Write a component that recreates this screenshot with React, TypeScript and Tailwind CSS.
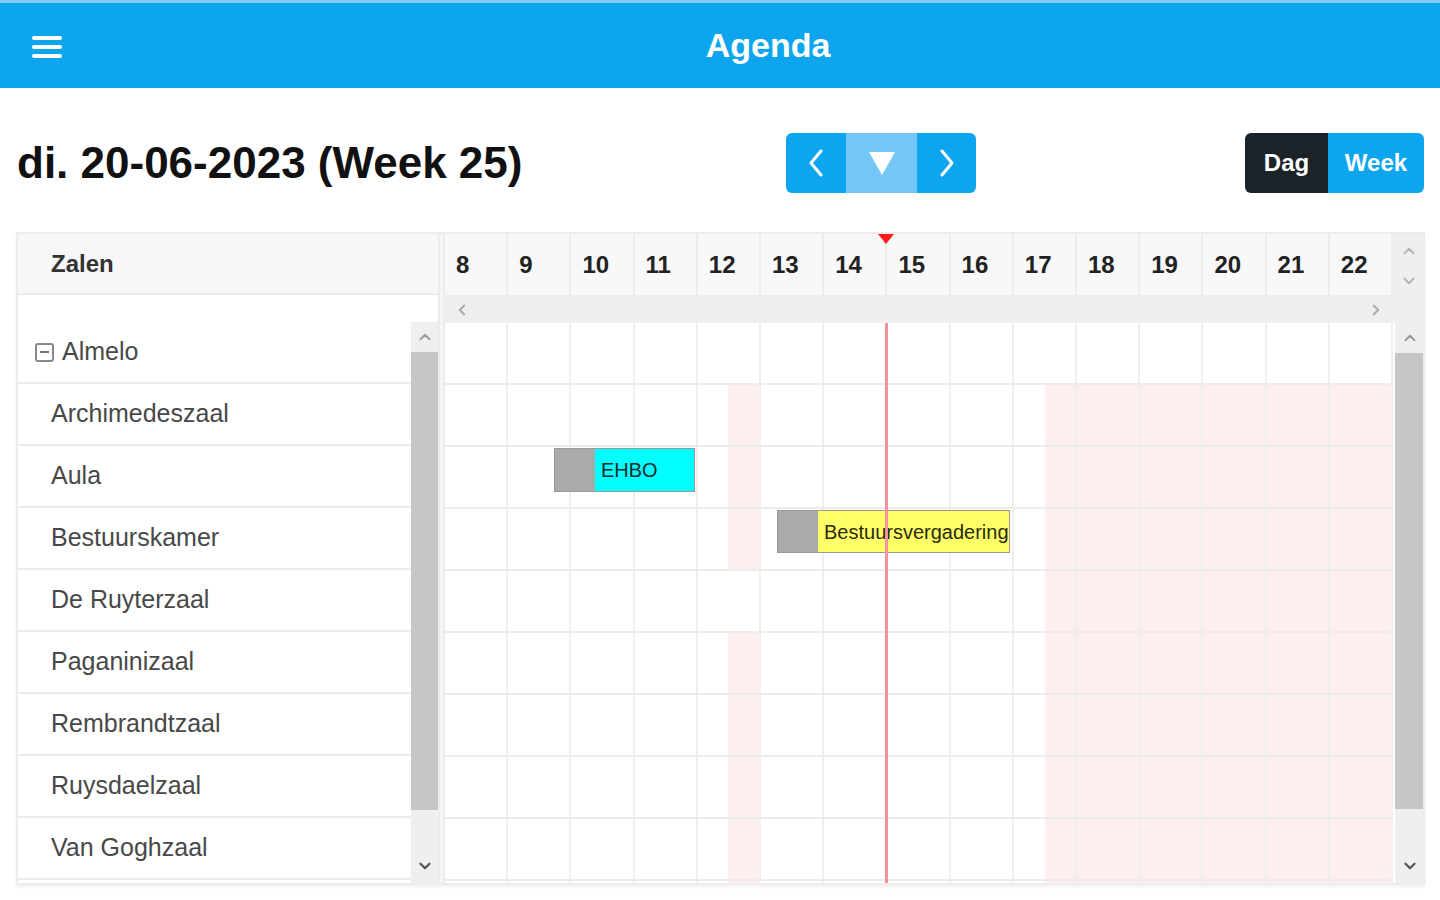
import { ChevronUp, ChevronDown, ChevronLeft, ChevronRight } from "lucide-react";

const hours = [8, 9, 10, 11, 12, 13, 14, 15, 16, 17, 18, 19, 20, 21, 22];

const rooms = [
  "Almelo",
  "Archimedeszaal",
  "Aula",
  "Bestuurskamer",
  "De Ruyterzaal",
  "Paganinizaal",
  "Rembrandtzaal",
  "Ruysdaelzaal",
  "Van Goghzaal",
  "",
];

// which hour cells are (partly) closed for a given row
const cellBg = (row: number, col: number) => {
  if (row === 0) return "bg-white";
  if (col >= 10) return "bg-[#fdefed]";
  if (col === 9) return "bg-[linear-gradient(to_right,#ffffff_50%,#fdefed_50%)]";
  if (col === 4 && row !== 4) return "bg-[linear-gradient(to_right,#ffffff_50%,#fdefed_50%)]";
  return "bg-white";
};

const Scrollbar = ({ thumbH, bottomPad }: { thumbH: number; bottomPad: number }) => (
  <div className="flex h-full flex-col items-center bg-[#efefef]">
    <div className="flex h-[30px] w-full items-center justify-center text-[#9a9a9a]">
      <ChevronUp size={18} strokeWidth={2.5} />
    </div>
    <div className="w-full bg-[#c6c6c6]" style={{ height: thumbH }} />
    <div className="flex-1" />
    <div className="flex w-full items-center justify-center text-[#555]" style={{ height: bottomPad }}>
      <ChevronDown size={18} strokeWidth={3} />
    </div>
  </div>
);

export default function App() {
  return (
    <div className="min-h-[900px] w-[1440px] bg-white font-['Liberation_Sans',Arial,sans-serif]">
      {/* Top bar */}
      <header className="relative flex h-[88px] items-center justify-center border-t-[3px] border-[#86cdf5] bg-[#0ea5ef] pl-[96px]">
        <div className="absolute left-[32px] top-[33px] flex flex-col gap-[5px]">
          <span className="block h-[4px] w-[30px] rounded-sm bg-white" />
          <span className="block h-[4px] w-[30px] rounded-sm bg-white" />
          <span className="block h-[4px] w-[30px] rounded-sm bg-white" />
        </div>
        <h1 className="text-[34px] font-bold text-white">Agenda</h1>
      </header>

      {/* Date + navigation */}
      <div className="mt-[45px] flex h-[60px] items-center pl-[17px] pr-[16px]">
        <div className="w-[769px] text-[44px] font-bold leading-none text-[#111]">di. 20-06-2023 (Week 25)</div>
        <div className="flex h-[60px] overflow-hidden rounded-[6px]">
          <button className="flex w-[60px] items-center justify-center bg-[#0ea5ef] text-white">
            <svg width="16" height="28" viewBox="0 0 16 28" fill="none">
              <path d="M13 2 L3 14 L13 26" stroke="white" strokeWidth="3" strokeLinecap="round" strokeLinejoin="round" />
            </svg>
          </button>
          <button className="flex w-[71px] items-center justify-center bg-[#74c7f5]">
            <svg width="28" height="26" viewBox="0 0 28 26">
              <path d="M1 2 L27 2 L14 25 Z" fill="white" />
            </svg>
          </button>
          <button className="flex w-[59px] items-center justify-center bg-[#0ea5ef]">
            <svg width="16" height="28" viewBox="0 0 16 28" fill="none">
              <path d="M3 2 L13 14 L3 26" stroke="white" strokeWidth="3" strokeLinecap="round" strokeLinejoin="round" />
            </svg>
          </button>
        </div>
        <div className="flex-1" />
        <div className="flex h-[60px] overflow-hidden rounded-[6px]">
          <button className="w-[83px] bg-[#1b2228] text-[24px] font-bold text-white">Dag</button>
          <button className="w-[96px] bg-[#0ea5ef] text-[24px] font-bold text-white">Week</button>
        </div>
      </div>

      {/* Scheduler */}
      <div className="ml-[16px] mt-[39px] flex h-[653px] w-[1409px] overflow-hidden border-2 border-[#ececec] shadow-[0_2px_3px_rgba(0,0,0,0.06)]">
        {/* Rooms pane */}
        <div className="flex w-[420px] flex-col">
          <div className="flex h-[61px] shrink-0 items-center border-b-2 border-[#ececec] bg-[#f7f7f7] pl-[33px] text-[24px] font-bold text-[#333]">
            Zalen
          </div>
          <div className="h-[27px] shrink-0 bg-white" />
          <div className="flex min-h-0 flex-1">
            <div className="w-[393px] overflow-hidden">
              {rooms.map((r, i) => (
                <div
                  key={i}
                  className={`flex h-[62px] items-center border-b-2 border-[#ececec] text-[25px] text-[#484848] ${i === 0 ? "pl-[17px]" : "pl-[33px]"}`}
                >
                  {i === 0 && (
                    <span className="mr-[8px] flex h-[19px] w-[19px] items-center justify-center rounded-[3px] border-2 border-[#8a8a8a]">
                      <span className="block h-[2px] w-[9px] bg-[#777]" />
                    </span>
                  )}
                  {r}
                </div>
              ))}
            </div>
            <div className="w-[27px]">
              <Scrollbar thumbH={458} bottomPad={34} />
            </div>
          </div>
        </div>

        {/* divider */}
        <div className="w-[7px] shrink-0 border-x-2 border-[#ececec] bg-[#f5f5f5]" />

        {/* Timeline pane */}
        <div className="flex w-[980px] flex-col">
          <div className="flex h-[63px] shrink-0">
            <div className="relative grid w-[948px] grid-cols-[repeat(15,1fr)] border-b-2 border-[#ececec] bg-[#f8f8f8]">
              {hours.map((h) => (
                <div key={h} className="flex items-center border-r-2 border-[#ececec] pl-[11px] text-[24px] font-bold text-[#222]">
                  {h}
                </div>
              ))}
              <svg className="absolute left-[433px] top-0" width="16" height="10" viewBox="0 0 16 10">
                <path d="M0 0 L16 0 L8 10 Z" fill="#ff1a1a" />
              </svg>
            </div>
            <div className="flex w-[32px] flex-col items-center justify-center gap-[12px] bg-[#efefef] text-[#b5b5b5]">
              <ChevronUp size={18} strokeWidth={2.5} />
              <ChevronDown size={18} strokeWidth={2.5} />
            </div>
          </div>
          <div className="flex h-[26px] shrink-0 items-center justify-between bg-[#efefef] pl-[8px] pr-[40px] text-[#aaa]">
            <ChevronLeft size={18} strokeWidth={2.5} />
            <ChevronRight size={18} strokeWidth={2.5} />
          </div>
          <div className="flex min-h-0 flex-1">
            <div className="relative w-[948px] overflow-hidden">
              {rooms.map((r, i) => (
                <div key={i} className="relative grid h-[62px] grid-cols-[repeat(15,1fr)] border-b-2 border-[#ececec]">
                  {hours.map((h, c) => (
                    <div key={h} className={`border-r-2 border-[#efefef] ${cellBg(i, c)}`} />
                  ))}
                  {r === "Aula" && (
                    <div className="absolute left-[109px] top-[1px] flex h-[44px] w-[141px] border border-[#999]">
                      <div className="w-[40px] bg-[#aaaaaa]" />
                      <div className="flex flex-1 items-center overflow-hidden bg-[#00ffff] pl-[6px] text-[20px] text-[#1d2b2b]">EHBO</div>
                    </div>
                  )}
                  {r === "Bestuurskamer" && (
                    <div className="absolute left-[332px] top-[1px] flex h-[43px] w-[233px] border border-[#999]">
                      <div className="w-[40px] bg-[#aaaaaa]" />
                      <div className="flex flex-1 items-center overflow-hidden whitespace-nowrap bg-[#ffff66] pl-[6px] text-[20px] text-[#2b2b10]">
                        Bestuursvergadering
                      </div>
                    </div>
                  )}
                </div>
              ))}
              <div className="absolute bottom-0 left-[440px] top-0 w-[3px] bg-[#f2939c]" />
            </div>
            <div className="w-[32px] pl-[2px]">
              <Scrollbar thumbH={456} bottomPad={35} />
            </div>
          </div>
        </div>
      </div>
    </div>
  );
}
